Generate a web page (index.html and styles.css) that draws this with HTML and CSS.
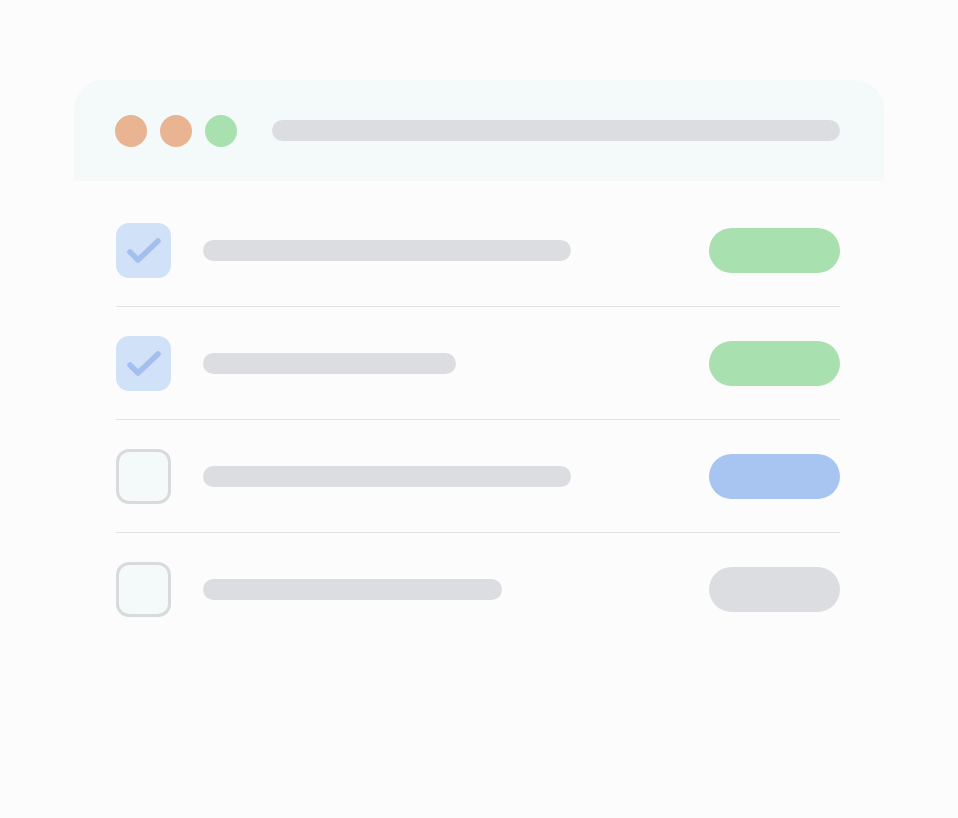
FILE: index.html
```html
<!DOCTYPE html>
<html lang="en">
<head>
<meta charset="utf-8">
<title>Task list</title>
<link rel="stylesheet" href="styles.css">
</head>
<body>
<main class="window">
  <header class="titlebar">
    <span class="dot dot-orange"></span>
    <span class="dot dot-orange"></span>
    <span class="dot dot-green"></span>
    <span class="address"></span>
  </header>
  <ul class="list">
    <li class="row">
      <span class="check checked">
        <svg viewBox="0 0 55 55" width="55" height="55"><path d="M14 29 L22 37 L42 18" fill="none" stroke="#a3bff0" stroke-width="5.5" stroke-linecap="round" stroke-linejoin="round"/></svg>
      </span>
      <span class="line" style="width:368px"></span>
      <span class="pill pill-green"></span>
    </li>
    <li class="row">
      <span class="check checked">
        <svg viewBox="0 0 55 55" width="55" height="55"><path d="M14 29 L22 37 L42 18" fill="none" stroke="#a3bff0" stroke-width="5.5" stroke-linecap="round" stroke-linejoin="round"/></svg>
      </span>
      <span class="line" style="width:253px"></span>
      <span class="pill pill-green"></span>
    </li>
    <li class="row">
      <span class="check"></span>
      <span class="line" style="width:368px"></span>
      <span class="pill pill-blue"></span>
    </li>
    <li class="row">
      <span class="check"></span>
      <span class="line" style="width:299px"></span>
      <span class="pill pill-gray"></span>
    </li>
  </ul>
</main>
</body>
</html>
```
FILE: styles.css
```css
html, body {
  margin: 0;
  padding: 0;
  background: #fcfcfc;
  font-family: "Liberation Sans", Arial, sans-serif;
}
.window {
  width: 810px;
  margin: 80px 0 0 74px;
}
.titlebar {
  height: 101px;
  box-sizing: border-box;
  padding: 0 44px 0 41px;
  background: #f4f9f9;
  border-radius: 30px 30px 0 0;
  display: flex;
  align-items: center;
  gap: 13px;
}
.dot {
  width: 32px;
  height: 32px;
  border-radius: 50%;
  flex: none;
}
.dot-orange { background: #e8b491; }
.dot-green { background: #a8e0b0; }
.address {
  flex: 1;
  height: 21px;
  margin-left: 22px;
  background: #dcdde0;
  border-radius: 11px;
}
.list {
  list-style: none;
  margin: 0;
  padding: 13px 44px 40px 42px;
}
.row {
  height: 112px;
  display: flex;
  align-items: center;
  border-bottom: 1px solid #dfe3e3;
}
.row:last-child { border-bottom: none; }
.check {
  width: 55px;
  height: 55px;
  box-sizing: border-box;
  border-radius: 13px;
  border: 3px solid #d8dadb;
  background: #f4f9f9;
  flex: none;
  display: flex;
}
.check.checked {
  border: none;
  background: #d1e1f8;
}
.line {
  height: 21px;
  margin-left: 32px;
  background: #dcdde0;
  border-radius: 11px;
}
.pill {
  width: 131px;
  height: 45px;
  margin-left: auto;
  border-radius: 23px;
}
.pill-green { background: #a8e0b0; }
.pill-blue { background: #a8c4f0; }
.pill-gray { background: #dcdde0; }
```
